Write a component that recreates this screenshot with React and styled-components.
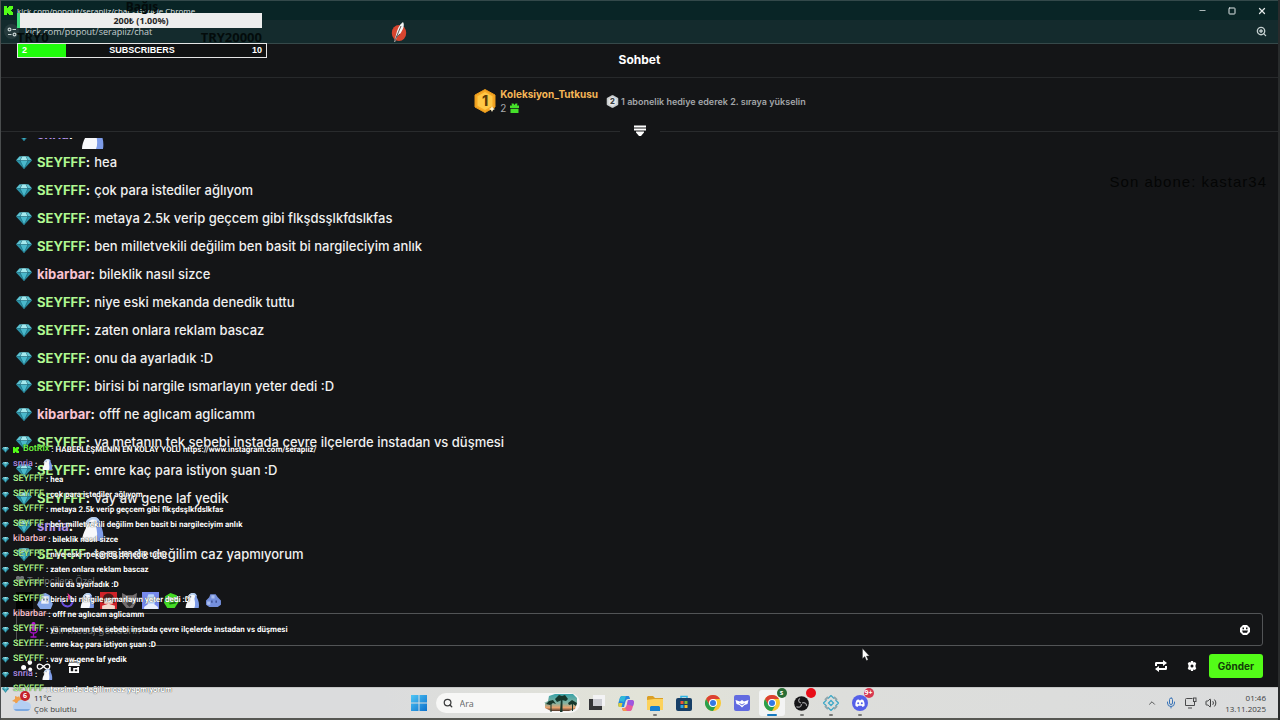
import React from "react";
import styled, { createGlobalStyle, css } from "styled-components";
import {
  Search,
  ZoomIn,
  Minus,
  Square,
  X,
  ChevronUp,
  Mic,
  Volume2,
  Infinity as InfinityIcon
} from "lucide-react";

const GlobalStyle = createGlobalStyle`
  * {
    box-sizing: border-box;
  }

  body {
    margin: 0;
    background: #141517;
    color: #fff;
    font-family: Inter, "Noto Sans", sans-serif;
  }

  button,
  input {
    font-family: inherit;
  }
`;

const colors = {
  SEYFFF: "#b0f891",
  kibarbar: "#fac3d2",
  snria: "#b190e8",
  BotRix: "#75fd46"
};

const messages = [
  { user: "snria", emote: true },
  { user: "SEYFFF", text: "hea" },
  { user: "SEYFFF", text: "çok para istediler ağlıyom" },
  { user: "SEYFFF", text: "metaya 2.5k verip geçcem gibi flkşdsşlkfdslkfas" },
  {
    user: "SEYFFF",
    text: "ben milletvekili değilim ben basit bi nargileciyim anlık"
  },
  { user: "kibarbar", text: "bileklik nasıl sizce" },
  { user: "SEYFFF", text: "niye eski mekanda denedik tuttu" },
  { user: "SEYFFF", text: "zaten onlara reklam bascaz" },
  { user: "SEYFFF", text: "onu da ayarladık :D" },
  { user: "SEYFFF", text: "birisi bi nargile ısmarlayın yeter dedi :D" },
  { user: "kibarbar", text: "offf ne aglıcam aglicamm" },
  {
    user: "SEYFFF",
    text: "ya metanın tek sebebi instada çevre ilçelerde instadan vs düşmesi"
  },
  { user: "SEYFFF", text: "emre kaç para istiyon şuan :D" },
  { user: "SEYFFF", text: "vay aw gene laf yedik" },
  { user: "snria", emote: true },
  { user: "SEYFFF", text: "tersimde değilim caz yapmıyorum" }
];

const overlayMessages = [
  {
    user: "BotRix",
    text: "HABERLEŞMENİN EN KOLAY YOLU https://www.instagram.com/serapiiz/",
    bot: true
  },
  ...messages
];

const Diamond = ({ size }) => (
  <svg width={size} height={size} viewBox="0 0 16 16" aria-hidden="true">
    <path d="M3.5 2.5h9L16 6.5 8 15 0 6.5z" fill="#2b93a8" />
    <path d="M3.5 2.5h9L16 6.5H0z" fill="#5fc3d2" />
    <path d="M4 6.5h8L8 15z" fill="#4ab9cc" />
    <path d="M5.5 2.5h5L12 6.5H4z" fill="#a5e9ee" />
    <path
      d="M0 6.5h16M4 6.5L8 15l4-8.5M4 6.5l2-4M12 6.5l-2-4"
      stroke="#1a5f72"
      strokeWidth="0.6"
      fill="none"
    />
  </svg>
);

const Penguin = ({ size }) => (
  <svg width={size} height={size} viewBox="0 0 24 24" aria-hidden="true">
    <path d="M13 0c4 0 6 3 6 7 3 5 4 11 3 17h-9z" fill="#7e9ce8" />
    <path d="M4 7c1-4 5-7 9-7 3 2 4 5 2 9 1 5 2 10 0 15H1c0-5 2-9 4-13z" fill="#f7f8fb" />
    <path d="M4 7c1-4 5-7 9-7 3 0 5 2 6 5-3-2-6-3-9-2-2 1-3 3-4 5z" fill="#b4ceef" />
    <circle cx="9" cy="6" r="1" fill="#25304b" />
    <path d="M3 7l4 1-3 2z" fill="#dfd9c8" />
  </svg>
);

const KickLogo = ({ size = 9 }) => (
  <svg width={size} height={size} viewBox="0 0 9 9" aria-hidden="true">
    <path d="M0 0h3v2h1V1h1V0h4v3H8v1H7v1h1v1h1v3H5V8H4V7H3v2H0z" fill="#53fc18" />
  </svg>
);

const Tune = () => (
  <svg width="10" height="10" viewBox="0 0 10 10" fill="none" stroke="#c6d1d1" strokeWidth="1.2" aria-hidden="true">
    <circle cx="2.5" cy="2.5" r="1.4" />
    <path d="M5.500 2.500H9M1 7.500h3.500" />
    <circle cx="7.5" cy="7.5" r="1.4" />
  </svg>
);

const Quill = () => (
  <svg width="18" height="22" viewBox="0 0 18 22" aria-hidden="true">
    <ellipse cx="9" cy="12" rx="7.2" ry="8" fill="#d8452f" />
    <path d="M4 21l2-7C7 9 9 4 13 1c2 3 0 8-3 12l-3 3-2 5z" fill="#f5f6f6" />
    <path d="M4.500 20.500L11 5M6.500 16l3.500-3" stroke="#3b2a2a" strokeWidth="0.8" fill="none" />
  </svg>
);

const Rank = ({ size, gold, children }) => (
  <svg width={size} height={size} viewBox="0 0 24 24" role="img" aria-label={`${children}`}>
    <path
      d="M12 0.500L22 6v12l-10 5.500L2 18V6z"
      fill={gold ? "#f5a623" : "#c7cbce"}
      stroke={gold ? "#e89a1c" : "#eceeef"}
    />
    <path d="M12 3l7.500 4.200v9.600L12 21l-7.500-4.200V7.200z" fill={gold ? "#ffc846" : "#e1e4e6"} />
    <text x="12" y="17" textAnchor="middle" fontSize="14" fontWeight="800" fill={gold ? "#5b3a06" : "#3a3d40"}>
      {children}
    </text>
    {gold && <path d="M19 17l1 2 2 1-2 1-1 2-1-2-2-1 2-1z" fill="#fff3c8" />}
  </svg>
);

const Gift = () => (
  <svg width="9" height="10" viewBox="0 0 9 10" aria-hidden="true">
    <path d="M0 2.500h2L1.500 0.500h2l1 1.500L5.500 0.500h2L7 2.500h2V5H0zM0.500 5.700h8V10h-8z" fill="#45e02a" />
  </svg>
);

const Collapse = () => (
  <svg width="12" height="12" viewBox="0 0 12 12" fill="#fff" aria-hidden="true">
    <path d="M0 0.500h12v2H0zM0 3.500h12v2H0zM2 6.500h8v1L7 11H5L2 7.500z" />
  </svg>
);

const Smile = () => (
  <svg width="10" height="10" viewBox="0 0 10 10" aria-hidden="true">
    <path d="M3 0h4l3 3v4L7 10H3L0 7V3z" fill="#fff" />
    <path d="M2.500 2.600h1.500v1.600H2.500zM6 2.600h1.500v1.600H6zM2 5.400h6L7 7.800H3z" fill="#141517" />
  </svg>
);

const Loop = () => (
  <svg width="12" height="12" viewBox="0 0 12 12" fill="#fff" aria-hidden="true">
    <path d="M0 6V2.800L1 2h7V0l4 3-4 3V4H2v2zM12 6v3.200l-1 .8H4v2L0 9l4-3v2h6V6z" />
  </svg>
);

const Cog = () => (
  <svg width="10" height="10" viewBox="0 0 10 10" aria-hidden="true">
    <path
      d="M4 0h2l.4 1.400L8 .9 9.300 2.800 8.500 4v2l.8 1.200L8 9.100l-1.600-.5L6 10H4l-.4-1.400L2 9.100.7 7.200 1.500 6V4L.7 2.800 2 .9l1.600.5z"
      fill="#fff"
    />
    <circle cx="5" cy="5" r="1.5" fill="#141517" />
  </svg>
);

const Dots = () => (
  <svg width="12" height="12" viewBox="0 0 12 12" fill="#fff" aria-hidden="true">
    <circle cx="8.8" cy="2.6" r="2.3" />
    <circle cx="2.6" cy="7.6" r="2.5" />
    <circle cx="9.2" cy="9.4" r="2" />
  </svg>
);

const Shop = () => (
  <svg width="12" height="13" viewBox="0 0 12 13" fill="#fff" aria-hidden="true">
    <path d="M1.500 0h9v1.500h-9zM1 2.500h10l1 3.500H0zM1 7h1.800v4.200h2.400V8h5.800v5H1zM6.800 9.500v1.700h2.400V9.500z" fillRule="evenodd" />
    <path d="M9.200 7H11v2H9.200z" />
  </svg>
);

const VoiceMic = () => (
  <svg width="9" height="16" viewBox="0 0 9 16" aria-hidden="true">
    <rect x="2.5" y="0" width="4" height="9" rx="2" fill="#c316e0" />
    <path d="M0.800 5v3c0 4 7.400 4 7.400 0V5M4.500 11v4M1.500 15h6" stroke="#a411c0" strokeWidth="1.3" fill="none" />
  </svg>
);

const Followers = () => (
  <svg width="8" height="8" viewBox="0 0 8 8" fill="#6e7174" aria-hidden="true">
    <path d="M1 0h2l1 1 1-1h2l1 1v3L4 8 0 4V1z" />
  </svg>
);

const Pointer = () => (
  <svg width="8" height="13" viewBox="0 0 8 13" aria-hidden="true">
    <path d="M0.500 0.500v10l2.300-2 1.700 4 1.600-.7-1.700-3.800h3z" fill="#fff" stroke="#333" strokeWidth="0.4" />
  </svg>
);

const Weather = () => (
  <svg width="20" height="20" viewBox="0 0 20 20" aria-hidden="true">
    <path d="M7 3l1 2 3 0 0 4-7 3-1-3-3-1 3-2 0-3 3 1z" fill="#f0a04c" />
    <path d="M5 18a4 4 0 010-8 5 5 0 019-1 4.500 4.500 0 011 9z" fill="#b4cff2" />
    <path d="M5 18a3 3 0 01-3-2h16a3.500 3.500 0 01-3 2z" fill="#7ca8df" />
  </svg>
);

const WindowsLogo = () => (
  <svg width="16" height="16" viewBox="0 0 16 16" aria-hidden="true">
    <defs>
      <linearGradient id="win" x1="0" y1="0" x2="1" y2="1">
        <stop offset="0" stopColor="#4fc6f5" />
        <stop offset="1" stopColor="#0c70cc" />
      </linearGradient>
    </defs>
    <path d="M0 0h7.500v7.500H0zM8.500 0H16v7.500H8.500zM0 8.500h7.500V16H0zM8.500 8.500H16V16H8.500z" fill="url(#win)" />
  </svg>
);

const Palms = () => (
  <svg width="34" height="18" viewBox="0 0 34 18" aria-hidden="true">
    <defs>
      <linearGradient id="sky" x1="0" y1="0" x2="0" y2="1">
        <stop offset="0" stopColor="#37a3a8" />
        <stop offset="0.55" stopColor="#86b2a0" />
        <stop offset="0.8" stopColor="#e9a26d" />
        <stop offset="1" stopColor="#4e3427" />
      </linearGradient>
    </defs>
    <path d="M5 2l6-2h18l4 4v5l-2 6-6 2H7l-6-3V9H0l4-2z" fill="url(#sky)" />
    <g fill="#17382c">
      <path d="M11 5l4-4 3 1 3-1 3 4-2 2-4-1-5 2zM2 10l3-3 4-1 3 4-3-1-3 2zM24 9l4-3 5 3-1 3-3-2-4 1z" />
      <path d="M17 4h1.500v14H16zM6.500 9h1v9h-1zM28 9h1v8h-1z" />
    </g>
  </svg>
);

const TaskView = () => (
  <svg width="16" height="16" viewBox="0 0 16 16" aria-hidden="true">
    <path d="M0 4h13v11H0z" fill="#333437" />
    <path d="M4 0h12v11H4z" fill="#f3f3f5" />
    <path d="M4 4h9v7H4z" fill="#cacbd1" />
  </svg>
);

const Copilot = () => (
  <svg width="16" height="15" viewBox="0 0 16 15" aria-hidden="true">
    <path d="M4.500 0H10c1 0 1.400.6 1.700 1.800L12 3h-2C8.500 3 8 4 7.500 5.500L6 11H2C0 11-.2 9 .3 7.300l1.500-5C2.200.8 3 0 4.500 0z" fill="#2785df" />
    <path d="M1 5l1-3C2.500.7 3.500 0 4.500 0H8L6 6z" fill="#30b9d8" />
    <path d="M.5 7h4l-1 4H2C0 11-.2 9 .5 7z" fill="#d9cd3f" />
    <path d="M11.500 15H6c-1 0-1.400-.6-1.700-1.800L4 12h2c1.500 0 2-1 2.500-2.500L10 4h4c2 0 2.200 2 1.700 3.700l-1.500 5c-.4 1.500-1.200 2.300-2.700 2.300z" fill="#e75c9b" />
    <path d="M10 4h4c2 0 2.200 2 1.700 3.700L15 10l-6-1.500z" fill="#9c57e0" />
    <path d="M4 12h3l2 3H6c-1 0-1.400-.6-1.700-1.800z" fill="#f6984c" />
  </svg>
);

const Folder = () => (
  <svg width="16" height="15" viewBox="0 0 16 15" aria-hidden="true">
    <path d="M0 1l1-1h5l2 2h8v5H0z" fill="#dba025" />
    <path d="M0 4l7-1h9v11H0z" fill="#fcd25b" />
    <path d="M3 15v-4l1-1h8l1 1v4z" fill="#1881cd" />
  </svg>
);

const Store = () => (
  <svg width="16" height="16" viewBox="0 0 16 16" aria-hidden="true">
    <path d="M5 5V1.500h6V5" stroke="#2eb5e6" strokeWidth="1.5" fill="none" />
    <rect x="0" y="3" width="16" height="13" rx="2" fill="#173f66" />
    <path d="M4.500 6h3v3h-3z" fill="#ee5534" />
    <path d="M8.500 6h3v3h-3z" fill="#80bd31" />
    <path d="M4.500 10h3v3h-3z" fill="#2ca6e2" />
    <path d="M8.500 10h3v3h-3z" fill="#f8bd29" />
  </svg>
);

const Chrome = () => (
  <svg width="16" height="16" viewBox="0 0 16 16" aria-hidden="true">
    <circle cx="8" cy="8" r="8" fill="#f8c831" />
    <path d="M1.070 4A8 8 0 0114.930 4H8L4.540 10z" fill="#dc4034" />
    <path d="M1.070 4A8 8 0 008 16l3.460-6-6.920 0z" fill="#2b9f4c" />
    <circle cx="8" cy="8" r="4" fill="#fff" />
    <circle cx="8" cy="8" r="3" fill="#3478e5" />
  </svg>
);

const Bird = () => (
  <svg width="16" height="16" viewBox="0 0 16 16" aria-hidden="true">
    <rect width="16" height="16" rx="2" fill="#626be0" />
    <path d="M1.500 5l4.500 1.500L8 5l2 1.500L14.500 5l-1 4-3 1L8 12.500 5.500 10l-3-1z" fill="#fff" />
    <path d="M5.500 8.500L8 10l2.500-1.500" stroke="#626be0" fill="none" />
  </svg>
);

const Obs = () => (
  <svg width="15" height="15" viewBox="0 0 15 15" aria-hidden="true">
    <circle cx="7.5" cy="7.5" r="7.3" fill="#151517" />
    <path d="M7 7C4 6 4 3.500 6 2.500M8 7c3-1 5 1 4.500 3M7.500 8c0 3-3 4-5 2.500" stroke="#9a9a9c" strokeWidth="1.2" fill="none" />
  </svg>
);

const Tiles = () => (
  <svg width="16" height="16" viewBox="0 0 16 16" fill="none" stroke="#3fa9c8" strokeWidth="1.3" aria-hidden="true">
    <path d="M8 5.500L10.500 8 8 10.500 5.500 8z" />
    <path d="M5 3.500l3-3 3 3M5 12.500l3 3 3-3M3.500 5l-3 3 3 3M12.500 5l3 3-3 3" />
    <path d="M2 5l3-3M11 2l3 3M2 11l3 3M11 14l3-3" stroke="#8fa5ab" strokeWidth="2" />
  </svg>
);

const Discord = () => (
  <svg width="16" height="16" viewBox="0 0 16 16" aria-hidden="true">
    <circle cx="8" cy="8" r="8" fill="#5560e8" />
    <path d="M3.500 11C3 8 4 6 5 4.800L7 4.500l.3.700h1.400l.3-.7 2 .3c1 1.200 2 3.200 1.500 6.200l-2 1-.8-1.200H6.300L5.500 12z" fill="#fff" />
    <circle cx="6.2" cy="8.3" r="1" fill="#5560e8" />
    <circle cx="9.8" cy="8.3" r="1" fill="#5560e8" />
  </svg>
);

const Network = () => (
  <svg width="12" height="12" viewBox="0 0 12 12" fill="none" stroke="#4a4b4c" aria-hidden="true">
    <path d="M7.500 1.500h-6a1 1 0 00-1 1v6h9V6M3 11h4M9.500 4.500v3" />
    <rect x="8.500" y="1" width="2.500" height="3.500" />
  </svg>
);

const EmoteArt = ({ kind }) => (
  <svg width="17" height="17" viewBox="0 0 16 16" aria-hidden="true">
    {kind === "dark" && <path d="M0 0h16v16H0z" fill="#020202" />}
    {kind === "blob" && (
      <>
        <path d="M2 8l2-6 4-1 4 2 1 5 2 3-2 5H3l-3-4z" fill="#88a9e8" />
        <path d="M4 4h7v7H4z" fill="#eef2fb" />
        <path d="M6 6h1v2H6zM9 6h1v2H9z" fill="#24345d" />
      </>
    )}
    {kind === "ring" && (
      <>
        <path d="M11 4a5 5 0 11-7 3" stroke="#6c4fdf" strokeWidth="2" fill="none" />
        <path d="M9 1l4 4-3 3z" fill="#e83d92" />
      </>
    )}
    {kind === "girl" && (
      <>
        <path d="M0 0h16v16H0z" fill="#cf2229" />
        <path d="M3 6c0-6 10-6 10 0l1 4H2z" fill="#451b1b" />
        <path d="M4 6h8v5H4zM2 13l6-2 6 2v3H2z" fill="#f1d9cd" />
        <path d="M5 7h2v1H5zM9 7h2v1H9z" fill="#241414" />
      </>
    )}
    {kind === "cat" && (
      <>
        <path d="M1 1l4 2h6l4-2-1 9-3 5H5l-4-5z" fill="#746f70" />
        <path d="M4 6h2v2H4zM10 6h2v2h-2z" fill="#d7d4d2" />
        <path d="M5 11l3-2 3 2-3 3z" fill="#3b3839" />
      </>
    )}
    {kind === "purple" && (
      <>
        <path d="M0 0h16v16H0z" fill="#7689ed" />
        <path d="M4 7l2-5h5l2 6-2 5H6z" fill="#bcd6fa" />
        <path d="M2 14l4-3h5l4 3v2H2z" fill="#e9eefc" />
      </>
    )}
    {kind === "frog" && (
      <>
        <path d="M2 4l5-3 6 2 2 6-4 6H4L1 10z" fill="#44db25" />
        <path d="M5 5h3v2H5zM10 5h3v2h-3z" fill="#fff" />
        <path d="M6 11l6-1" stroke="#146c12" strokeWidth="1.5" />
      </>
    )}
    {kind === "cloud" && (
      <>
        <path d="M4 5l1-3h5l2 3 3 3v4l-3 2H4l-3-2V8z" fill="#748fdc" />
        <path d="M6 3h3v3H6zM2 9h3v3H2z" fill="#a9bdf0" />
        <path d="M6 8h1v2H6zM10 8h1v2h-1z" fill="#263776" />
      </>
    )}
  </svg>
);

const emotes = ["dark", "blob", "ring", "penguin", "girl", "cat", "purple", "frog", "penguin", "cloud"];

const apps = [
  { name: "Görev görünümü", icon: <TaskView /> },
  { name: "Copilot", icon: <Copilot /> },
  { name: "Dosya Gezgini", icon: <Folder />, running: true },
  { name: "Store", icon: <Store /> },
  { name: "Chrome", icon: <Chrome /> },
  { name: "Bird", icon: <Bird /> },
  { name: "Kick", icon: <Chrome />, active: true, badge: "s", tone: "#286d35" },
  { name: "OBS", icon: <Obs />, running: true, badge: " ", tone: "#e80d18" },
  { name: "Tiles", icon: <Tiles />, running: true },
  { name: "Discord", icon: <Discord />, running: true, badge: "9+", tone: "#d73850" }
];

const App = () => (
  <Page>
    <GlobalStyle />
    <TitleBar>
      <Title>
        <KickLogo />
        <span>kick.com/popout/serapiiz/chat - Google Chrome</span>
      </Title>
      <WindowButtons>
        <IconButton aria-label="Simge durumuna küçült"><Minus size={9} /></IconButton>
        <IconButton aria-label="Ekranı kapla"><Square size={8} strokeWidth={3} /></IconButton>
        <IconButton aria-label="Kapat"><X size={10} strokeWidth={3} /></IconButton>
      </WindowButtons>
    </TitleBar>
    <AddressBar>
      <Address>
        <SiteInfo><Tune /></SiteInfo>
        <span>kick.com/popout/serapiiz/chat</span>
      </Address>
      <IconButton aria-label="Yakınlaştır"><ZoomIn size={11} strokeWidth={3} /></IconButton>
    </AddressBar>

    <ChatHeader>Sohbet</ChatHeader>
    <Leaderboard>
      <Rank size={24} gold>1</Rank>
      <Leader>
        <LeaderName>Koleksiyon_Tutkusu</LeaderName>
        <GiftCount>2 <Gift /></GiftCount>
      </Leader>
      <NextRank>
        <Rank size={13}>2</Rank>
        <span>1 abonelik hediye ederek 2. sıraya yükselin</span>
      </NextRank>
    </Leaderboard>
    <Divider>
      <IconButton aria-label="Daralt"><Collapse /></IconButton>
    </Divider>

    <ChatLog>
      {messages.map((m, i) => (
        <Message key={i}>
          <Diamond size={16} />
          <Name $user={m.user}>{m.user}</Name>
          <b>:</b>
          {m.emote ? <EmoteSlot><Penguin size={24} /></EmoteSlot> : <Text>{m.text}</Text>}
        </Message>
      ))}
    </ChatLog>

    <Composer>
      <FollowersOnly><Followers />Takipçilere Özel</FollowersOnly>
      <EmoteRow>
        {emotes.map((kind, i) => (
          <IconButton key={i} aria-label={`Emote ${i + 1}`}>
            {kind === "penguin" ? <Penguin size={15} /> : <EmoteArt kind={kind} />}
          </IconButton>
        ))}
      </EmoteRow>
      <InputBox>
        <VoiceMic />
        <MessageInput aria-label="Mesaj" placeholder="Bir mesaj gönderin" />
        <IconButton aria-label="Emoji"><Smile /></IconButton>
      </InputBox>
      <Actions>
        <ActionGroup>
          <IconButton aria-label="Puanlar"><Dots /></IconButton>
          <IconButton aria-label="Sonsuz"><InfinityIcon size={15} strokeWidth={2} /></IconButton>
          <ShopButton aria-label="Mağaza"><Shop /></ShopButton>
        </ActionGroup>
        <SendGroup>
          <IconButton aria-label="Döngü"><Loop /></IconButton>
          <IconButton aria-label="Ayarlar"><Cog /></IconButton>
          <SendButton>Gönder</SendButton>
        </SendGroup>
      </Actions>
    </Composer>

    <Taskbar>
      <WeatherBox>
        <WeatherIcon>
          <Weather />
          <Badge $tone="#c5242b" $large>6</Badge>
        </WeatherIcon>
        <div>
          <Degrees>11°C</Degrees>
          <div>Çok bulutlu</div>
        </div>
      </WeatherBox>
      <Center>
        <AppButton aria-label="Başlat"><WindowsLogo /></AppButton>
        <SearchBox>
          <Search size={10} strokeWidth={3} />
          <SearchInput aria-label="Ara" placeholder="Ara" />
          <Palms />
        </SearchBox>
        {apps.map(app => (
          <AppButton key={app.name} aria-label={app.name} $active={app.active} $running={app.running}>
            {app.icon}
            {app.badge && <Badge $tone={app.tone}>{app.badge}</Badge>}
          </AppButton>
        ))}
      </Center>
      <Tray>
        <ChevronUp size={10} />
        <Mic size={12} color="#3974b8" />
        <Network />
        <Volume2 size={12} />
        <Clock>
          <div>01:46</div>
          <div>13.11.2025</div>
        </Clock>
      </Tray>
    </Taskbar>

    <Goals>
      <GoalTitle>Bağış</GoalTitle>
      <DonationBar>200₺ (1.00%)</DonationBar>
      <GoalRange>
        <span>TRY0</span>
        <span>TRY20000</span>
      </GoalRange>
      <SubBar>
        <SubCount>2</SubCount>
        <span>SUBSCRIBERS</span>
        <SubTarget>10</SubTarget>
      </SubBar>
    </Goals>
    <QuillMark><Quill /></QuillMark>
    <LastSub>Son abone: kastar34</LastSub>
    <StreamChat>
      {overlayMessages.map((m, i) => (
        <StreamRow key={i}>
          <Diamond size={7} />
          {m.bot && <KickLogo size={6} />}
          <StreamName $user={m.user}>{m.user}</StreamName>
          <span>:</span>
          {m.emote ? <StreamEmote><Penguin size={11} /></StreamEmote> : <span>{m.text}</span>}
        </StreamRow>
      ))}
    </StreamChat>
    <Cursor><Pointer /></Cursor>
  </Page>
);

const Page = styled.div`
  position: relative;
  display: flex;
  flex-direction: column;
  height: 100vh;
  overflow: hidden;
  border-left: 1px solid #4a4d4e;
  border-right: 2px solid #292b2c;
`;

const IconButton = styled.button`
  display: inline-flex;
  align-items: center;
  justify-content: center;
  padding: 0;
  border: 0;
  background: none;
  color: inherit;
`;

const TitleBar = styled.header`
  display: flex;
  flex: none;
  align-items: center;
  justify-content: space-between;
  height: 20px;
  padding: 0 11px 0 3px;
  border-top: 1px solid #33494a;
  background: #092526;
  color: #e1e8e8;
`;

const Title = styled.div`
  display: flex;
  align-items: center;
  gap: 4px;
  font: 8px "Open Sans", sans-serif;
`;

const WindowButtons = styled.div`
  display: flex;
  align-items: center;
  gap: 21px;
`;

const AddressBar = styled.div`
  display: flex;
  flex: none;
  align-items: center;
  justify-content: space-between;
  height: 24px;
  padding: 0 11px 0 3px;
  border-bottom: 1px solid #36494a;
  background: #142b2d;
  color: #c4cfcf;
`;

const Address = styled.div`
  display: flex;
  align-items: center;
  gap: 6px;
  font: 9px "Open Sans", sans-serif;
`;

const SiteInfo = styled.span`
  display: flex;
  align-items: center;
  justify-content: center;
  width: 15px;
  height: 15px;
  border-radius: 50%;
  background: #263b3d;
`;

const ChatHeader = styled.h1`
  flex: none;
  height: 34px;
  margin: 0;
  border-bottom: 1px solid #27292b;
  font-size: 12px;
  font-weight: 700;
  line-height: 32px;
  text-align: center;
`;

const Leaderboard = styled.section`
  display: flex;
  flex: none;
  align-items: center;
  justify-content: center;
  height: 46px;
`;

const Leader = styled.div`
  margin: 0 8px 0 3px;
  font-size: 10px;
  line-height: 14px;
`;

const LeaderName = styled.div`
  color: #f6b757;
  font-weight: 700;
`;

const GiftCount = styled.div`
  display: flex;
  align-items: center;
  gap: 4px;
  color: #a7a9ac;
`;

const NextRank = styled.div`
  display: flex;
  align-items: center;
  gap: 2px;
  color: #a3a6a9;
  font-size: 9px;
  font-weight: 600;
`;

const Divider = styled.div`
  display: flex;
  flex: none;
  align-items: center;
  gap: 14px;
  height: 14px;

  &::before,
  &::after {
    content: "";
    flex: 1;
    border-top: 1px solid #292b2d;
  }
`;

const ChatLog = styled.main`
  display: flex;
  flex: 1;
  flex-direction: column;
  justify-content: flex-end;
  min-height: 0;
  padding-left: 15px;
  overflow: hidden;
`;

const Message = styled.div`
  display: flex;
  flex: none;
  align-items: center;
  height: 28px;
  font-size: 13px;
  font-weight: 500;
  white-space: nowrap;

  & > svg {
    margin-right: 5px;
  }
`;

const Name = styled.b`
  color: ${({ $user }) => colors[$user]};
  font-weight: 700;
`;

const Text = styled.span`
  margin-left: 4px;
  color: #f0f0f0;
`;

const EmoteSlot = styled.span`
  display: flex;
  margin: 5px 0 0 8px;
`;

const Composer = styled.section`
  flex: none;
  padding: 4px 15px 5px;
`;

const FollowersOnly = styled.div`
  display: flex;
  align-items: center;
  gap: 3px;
  height: 16px;
  color: #6e7174;
  font-size: 9px;
`;

const EmoteRow = styled.div`
  display: flex;
  align-items: center;
  gap: 4px;
  height: 25px;

  & > button {
    width: 17px;
  }
`;

const InputBox = styled.div`
  display: flex;
  align-items: center;
  gap: 14px;
  height: 33px;
  padding: 0 12px;
  border: 1px solid #525456;
  border-radius: 3px;
`;

const MessageInput = styled.input`
  flex: 1;
  min-width: 0;
  padding: 0;
  border: 0;
  background: none;
  color: #fff;
  font-size: 10px;

  &::placeholder {
    color: #6c6f72;
  }
`;

const Actions = styled.div`
  display: flex;
  align-items: center;
  justify-content: space-between;
  height: 32px;
  margin-top: 4px;
`;

const ActionGroup = styled.div`
  display: flex;
  align-items: center;
  gap: 3px;
  padding-left: 5px;
`;

const ShopButton = styled(IconButton)`
  margin-left: 14px;
`;

const SendGroup = styled.div`
  display: flex;
  align-items: center;
  gap: 20px;
`;

const SendButton = styled.button`
  height: 24px;
  margin-left: -8px;
  padding: 0 9px;
  border: 0;
  border-radius: 3px;
  background: #53fc18;
  color: #123d08;
  font-size: 10px;
  font-weight: 700;
`;

const Taskbar = styled.footer`
  display: grid;
  flex: none;
  grid-template-columns: 1fr auto 1fr;
  align-items: center;
  height: 33px;
  padding: 0 12px 0 11px;
  border-top: 1px solid #c5c6c6;
  border-bottom: 2px solid #565752;
  background: linear-gradient(90deg, #dbdcdd 30%, #e2e3d8 50%, #dddedb 65%, #dbdcdd);
  color: #3b3c3d;
  font-family: "Open Sans", sans-serif;
  font-size: 8px;
  line-height: 11px;
`;

const WeatherBox = styled.div`
  display: flex;
  align-items: center;
  gap: 2px;
`;

const WeatherIcon = styled.div`
  position: relative;
  display: flex;
`;

const Degrees = styled.div`
  color: #202122;
`;

const Badge = styled.span`
  position: absolute;
  top: -2px;
  right: ${({ $large }) => ($large ? "2px" : "-2px")};
  min-width: 10px;
  height: 10px;
  border-radius: 5px;
  background: ${({ $tone }) => $tone};
  color: #fff;
  font: 700 7px/10px "Open Sans", sans-serif;
  text-align: center;
`;

const Center = styled.div`
  display: flex;
  align-items: center;
  gap: 5px;
`;

const AppButton = styled.button`
  position: relative;
  display: flex;
  align-items: center;
  justify-content: center;
  width: ${({ $active }) => ($active ? "26px" : "24px")};
  height: 26px;
  padding: 0;
  border: 0;
  border-radius: 3px;
  background: ${({ $active }) => ($active ? "#f3f4f4" : "none")};

  ${({ $active, $running }) =>
    ($active || $running) &&
    css`
      &::after {
        content: "";
        position: absolute;
        bottom: 0;
        width: ${$active ? "10px" : "4px"};
        height: 2px;
        border-radius: 1px;
        background: ${$active ? "#1679bd" : "#777876"};
      }
    `}
`;

const SearchBox = styled.label`
  display: flex;
  align-items: center;
  gap: 7px;
  width: 144px;
  height: 20px;
  padding: 0 2px 0 7px;
  border-radius: 10px;
  background: #f7f7f6;
`;

const SearchInput = styled.input`
  flex: 1;
  min-width: 0;
  padding: 0;
  border: 0;
  background: none;
  font-size: 9px;

  &::placeholder {
    color: #666768;
  }
`;

const Tray = styled.div`
  display: flex;
  align-items: center;
  justify-content: flex-end;
  gap: 8px;
`;

const Clock = styled.div`
  text-align: right;
`;

/* widgets that float above the window */
const Goals = styled.aside`
  position: absolute;
  top: 0;
  left: 16px;
  width: 250px;
`;

const GoalTitle = styled.div`
  height: 13px;
  color: #030b0b;
  font: 700 12px/14px "Noto Sans", sans-serif;
  text-align: center;
`;

const DonationBar = styled.div`
  width: 245px;
  height: 15px;
  border-left: 3px solid #3dde7b;
  background: #ededed;
  color: #252525;
  font: 700 9px/15px "Noto Sans", sans-serif;
  text-align: center;
`;

const GoalRange = styled.div`
  display: flex;
  justify-content: space-between;
  width: 245px;
  height: 15px;
  color: #030b0b;
  font: 700 13px/19px "Noto Sans", sans-serif;
`;

const SubBar = styled.div`
  display: grid;
  grid-template-columns: 48px 1fr 48px;
  height: 15px;
  border: 1px solid #e5e5e5;
  background: #101112;
  font: 700 9px/13px "Liberation Sans", sans-serif;
  text-align: center;
`;

const SubCount = styled.span`
  padding-left: 4px;
  background: #20fc0c;
  text-align: left;
`;

const SubTarget = styled.span`
  padding-right: 4px;
  text-align: right;
`;

const QuillMark = styled.div`
  position: absolute;
  top: 21px;
  left: 389px;
`;

const LastSub = styled.div`
  position: absolute;
  top: 173px;
  right: 11px;
  color: #040505;
  font: 15px/18px "Liberation Sans", sans-serif;
  letter-spacing: 1px;
`;

const StreamChat = styled.aside`
  position: absolute;
  bottom: 23px;
  left: 1px;
  height: 253px;
  overflow: hidden;
  display: flex;
  flex-direction: column;
  justify-content: flex-end;
  font: 700 8px/15px Roboto, sans-serif;
  text-rendering: geometricPrecision;
`;

const StreamRow = styled.div`
  display: flex;
  flex: none;
  align-items: center;
  gap: 2px;
  height: 15px;
  white-space: nowrap;
  text-shadow: 0 0 1px #000;

  & > svg {
    margin-right: 2px;
  }
`;

const StreamName = styled(Name)`
  font-size: 9px;
  font-weight: 500;
`;

const StreamEmote = styled.span`
  display: flex;
  margin-left: 3px;
`;

const Cursor = styled.div`
  position: absolute;
  top: 648px;
  left: 861px;
  display: flex;
`;

export default App;
